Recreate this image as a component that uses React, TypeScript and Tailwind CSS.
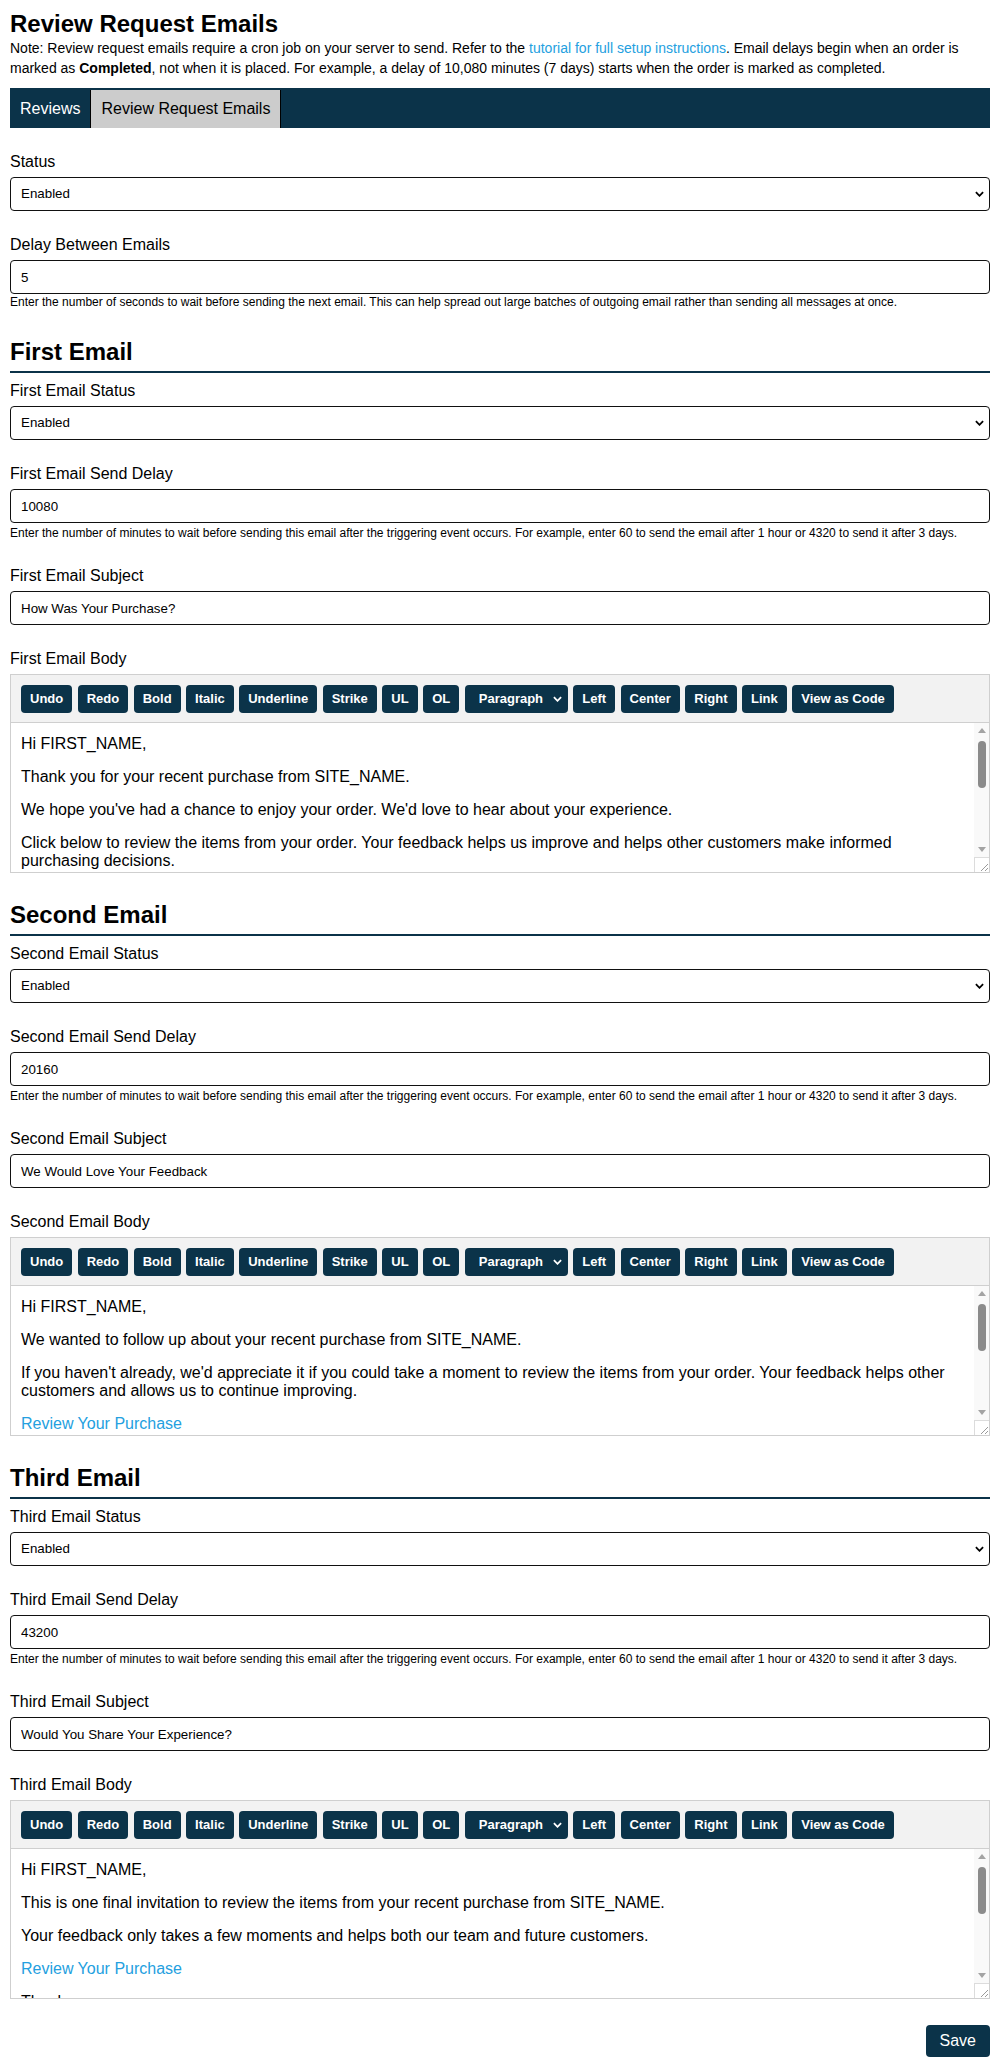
import React from 'react';

const NAVY = 'bg-[#0b3349]';

const TOOL_LEFT = ['Undo', 'Redo', 'Bold', 'Italic', 'Underline', 'Strike', 'UL', 'OL'];
const TOOL_RIGHT = ['Left', 'Center', 'Right', 'Link', 'View as Code'];

type EmailDef = {
  name: string;
  delay: string;
  subject: string;
  body: { text: string; link?: boolean }[];
};

const DELAY_HELP =
  'Enter the number of minutes to wait before sending this email after the triggering event occurs. For example, enter 60 to send the email after 1 hour or 4320 to send it after 3 days.';

const EMAILS: EmailDef[] = [
  {
    name: 'First',
    delay: '10080',
    subject: 'How Was Your Purchase?',
    body: [
      { text: 'Hi FIRST_NAME,' },
      { text: 'Thank you for your recent purchase from SITE_NAME.' },
      { text: "We hope you've had a chance to enjoy your order. We'd love to hear about your experience." },
      {
        text: 'Click below to review the items from your order. Your feedback helps us improve and helps other customers make informed purchasing decisions.',
      },
      { text: 'Review Your Purchase', link: true },
      { text: 'Thanks,' },
      { text: 'SITE_NAME' },
    ],
  },
  {
    name: 'Second',
    delay: '20160',
    subject: 'We Would Love Your Feedback',
    body: [
      { text: 'Hi FIRST_NAME,' },
      { text: 'We wanted to follow up about your recent purchase from SITE_NAME.' },
      {
        text: "If you haven't already, we'd appreciate it if you could take a moment to review the items from your order. Your feedback helps other customers and allows us to continue improving.",
      },
      { text: 'Review Your Purchase', link: true },
      { text: 'Thanks,' },
      { text: 'SITE_NAME' },
    ],
  },
  {
    name: 'Third',
    delay: '43200',
    subject: 'Would You Share Your Experience?',
    body: [
      { text: 'Hi FIRST_NAME,' },
      { text: 'This is one final invitation to review the items from your recent purchase from SITE_NAME.' },
      { text: 'Your feedback only takes a few moments and helps both our team and future customers.' },
      { text: 'Review Your Purchase', link: true },
      { text: 'Thanks,' },
      { text: 'SITE_NAME' },
    ],
  },
];

function Chevron({ className }: { className: string }) {
  return (
    <svg viewBox="0 0 10 6" className={className} fill="none" stroke="currentColor" strokeWidth="2">
      <path d="M1 1l4 4 4-4" />
    </svg>
  );
}

function Label({ children }: { children: React.ReactNode }) {
  return <label className="block text-[16px] leading-[20px] mb-[5px]">{children}</label>;
}

function StatusSelect({ label }: { label: string }) {
  return (
    <div className="flex flex-col mb-[24px]">
      <Label>{label}</Label>
      <div className="relative">
        <select
          defaultValue="enabled"
          className="block w-full h-[34px] appearance-none border border-[#111] rounded-[4px] bg-white px-[10px] text-[13.33px] text-black"
        >
          <option value="enabled">Enabled</option>
          <option value="disabled">Disabled</option>
        </select>
        <Chevron className="absolute right-[6px] top-[14px] w-[9px] h-[6px] text-black pointer-events-none" />
      </div>
    </div>
  );
}

function TextField({
  label,
  value,
  help,
  helpClass = 'mt-[2px] mb-[1px]',
}: {
  label: string;
  value: string;
  help?: string;
  helpClass?: string;
}) {
  return (
    <div className="flex flex-col mb-[24px]">
      <Label>{label}</Label>
      <input
        type="text"
        defaultValue={value}
        className="block w-full h-[34px] border border-[#111] rounded-[4px] bg-white px-[10px] text-[13.33px] text-black"
      />
      {help && <p className={`text-[12px] leading-[16px] ${helpClass}`}>{help}</p>}
    </div>
  );
}

function ToolButton({ children }: { children: React.ReactNode }) {
  return (
    <button
      type="button"
      className={`h-[28px] px-[9px] rounded-[4px] ${NAVY} text-white text-[13px] font-bold`}
    >
      {children}
    </button>
  );
}

// drawn scrollbar column: the page is shot without native scrollbars
function ScrollColumn() {
  return (
    <div className="flex flex-col w-[15px] shrink-0 bg-[#f9f9f9]">
      <div className="h-[15px] flex items-center justify-center">
        <svg viewBox="0 0 8 5" className="w-[8px] h-[5px] text-[#a3a3a3]" fill="currentColor">
          <path d="M4 0L8 5H0z" />
        </svg>
      </div>
      <div className="flex-1 flex justify-center">
        <div className="mt-[3px] w-[8px] h-[47px] rounded-full bg-[#8b8b8b]" />
      </div>
      <div className="h-[15px] flex items-center justify-center">
        <svg viewBox="0 0 8 5" className="w-[8px] h-[5px] text-[#a3a3a3]" fill="currentColor">
          <path d="M0 0h8L4 5z" />
        </svg>
      </div>
      <div className="h-[15px] bg-white border-l border-t border-[#dcdcdc] flex items-end justify-end">
        <svg viewBox="0 0 14 14" className="w-[14px] h-[14px] text-[#9a9a9a]" fill="none" stroke="currentColor">
          <path d="M13 6L6 13M13 10L10 13" />
        </svg>
      </div>
    </div>
  );
}

function Editor({ label, body }: { label: string; body: EmailDef['body'] }) {
  return (
    <div className="flex flex-col mb-[24px]">
      <Label>{label}</Label>
      <div className="border border-[#cfcfcf]">
        <div className="flex flex-wrap gap-[5.5px] bg-[#f2f2f2] border-b border-[#cfcfcf] px-[10px] pt-[10px] pb-[9px]">
          {TOOL_LEFT.map((t) => (
            <ToolButton key={t}>{t}</ToolButton>
          ))}
          <div className="relative w-[103px] h-[28px]">
            <select
              defaultValue="p"
              className={`block w-full h-full appearance-none rounded-[4px] ${NAVY} text-white text-[13px] font-bold pl-[14px] pr-[20px]`}
            >
              <option value="p">Paragraph</option>
              <option value="h2">Heading 2</option>
              <option value="h3">Heading 3</option>
            </select>
            <Chevron className="absolute right-[6px] top-[11px] w-[9px] h-[6px] text-white pointer-events-none" />
          </div>
          {TOOL_RIGHT.map((t) => (
            <ToolButton key={t}>{t}</ToolButton>
          ))}
        </div>
        <div className="flex h-[149px] bg-white">
          <div
            contentEditable
            suppressContentEditableWarning
            className="flex-1 min-w-0 overflow-hidden px-[10px] pt-[12px] text-[16px] leading-[18px] outline-none"
          >
            {body.map((p, i) =>
              p.link ? (
                <p key={i} className="mb-[15px]">
                  <a href="#" className="text-[#24a0e0]">
                    {p.text}
                  </a>
                </p>
              ) : (
                <p key={i} className="mb-[15px]">
                  {p.text}
                </p>
              ),
            )}
          </div>
          <ScrollColumn />
        </div>
      </div>
    </div>
  );
}

function EmailSection({ email }: { email: EmailDef }) {
  return (
    <section className="flex flex-col">
      <h2 className="text-[24px] leading-[28px] font-bold mt-[4px] pb-[5px] border-b-2 border-[#0b3349] mb-[8px]">
        {email.name} Email
      </h2>
      <StatusSelect label={`${email.name} Email Status`} />
      <TextField label={`${email.name} Email Send Delay`} value={email.delay} help={DELAY_HELP} />
      <TextField label={`${email.name} Email Subject`} value={email.subject} />
      <Editor label={`${email.name} Email Body`} body={email.body} />
    </section>
  );
}

export default function App() {
  return (
    <div className="flex flex-col px-[10px] pt-[10px] pb-[19px] bg-white text-black font-['Liberation_Sans',Arial,sans-serif]">
      <h1 className="text-[24px] leading-[28px] font-bold">Review Request Emails</h1>
      <p className="text-[14px] leading-[20px]">
        Note: Review request emails require a cron job on your server to send. Refer to the{' '}
        <a href="#" className="text-[#24a0e0]">
          tutorial for full setup instructions
        </a>
        . Email delays begin when an order is marked as <strong>Completed</strong>, not when it is placed. For
        example, a delay of 10,080 minutes (7 days) starts when the order is marked as completed.
      </p>

      <nav className={`flex h-[40px] mt-[10px] mb-[24px] pt-[2px] ${NAVY}`}>
        <button type="button" className="px-[10px] text-[16px] text-white">
          Reviews
        </button>
        <button type="button" className="px-[10px] text-[16px] text-black bg-[#cccccc] border-x border-black">
          Review Request Emails
        </button>
      </nav>

      <StatusSelect label="Status" />
      <TextField
        label="Delay Between Emails"
        value="5"
        helpClass=""
        help="Enter the number of seconds to wait before sending the next email. This can help spread out large batches of outgoing email rather than sending all messages at once."
      />

      {EMAILS.map((e) => (
        <EmailSection key={e.name} email={e} />
      ))}

      <div className="flex justify-end mt-[2px]">
        <button type="button" className={`h-[32px] px-[14px] rounded-[4px] ${NAVY} text-white text-[16px]`}>
          Save
        </button>
      </div>
    </div>
  );
}
